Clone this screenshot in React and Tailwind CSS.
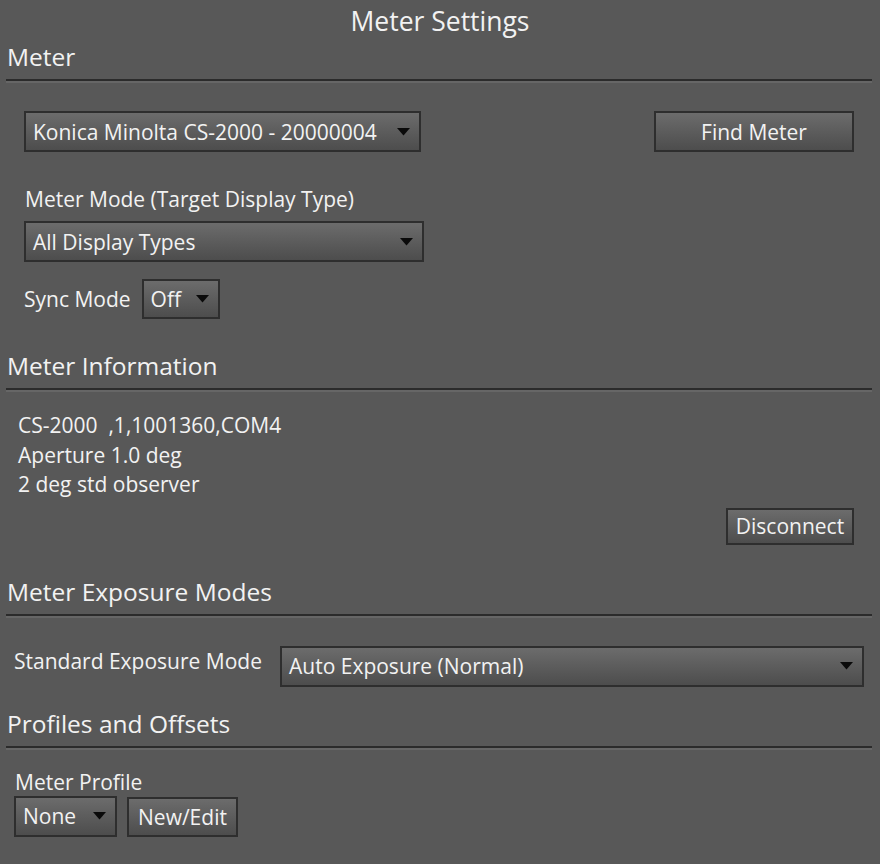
import React from "react";

function Arrow() {
  return (
    <svg width="13" height="8" viewBox="0 0 13 8" className="shrink-0">
      <path d="M0 0 L13 0 L6.5 7.5 Z" fill="#0a0a0a" />
    </svg>
  );
}

function Select({ value, className }) {
  return (
    <div
      className={
        "flex items-center justify-between border-2 border-[#2e2e2e] bg-gradient-to-b from-[#6c6c6c] to-[#4d4d4d] pl-[7px] pr-[9px] " +
        className
      }
    >
      <span className="whitespace-nowrap">{value}</span>
      <Arrow />
    </div>
  );
}

function Button({ label, className }) {
  return (
    <button
      className={
        "flex items-center justify-center border-2 border-[#2e2e2e] bg-gradient-to-b from-[#6c6c6c] to-[#4d4d4d] text-[#f2f2f2] " +
        className
      }
    >
      {label}
    </button>
  );
}

function Heading({ title }) {
  return (
    <>
      <div className="h-[34px] pl-[7px] text-[24.5px] leading-[34px]">{title}</div>
      <div className="mt-[5px] ml-[6px] w-[866px] border-t-2 border-[#2b2b2b] bg-[#666666] h-[4px]"></div>
    </>
  );
}

export default function App() {
  return (
    <div
      className="w-[880px] h-[864px] bg-[#585858] text-[#f2f2f2] text-[21px] leading-[24px] overflow-hidden"
      style={{ fontFamily: '"Open Sans", "Noto Sans", sans-serif' }}
    >
      <div className="h-[40px] flex items-center justify-center text-[26.5px] pt-[2px]">
        Meter Settings
      </div>

      <Heading title="Meter" />
      <div className="mt-[28px] pl-[24px] pr-[26px] flex justify-between">
        <Select value="Konica Minolta CS-2000 - 20000004" className="w-[397px] h-[41px]" />
        <Button label="Find Meter" className="w-[200px] h-[41px]" />
      </div>
      <div className="mt-[35px] pl-[25px] h-[24px]">Meter Mode (Target Display Type)</div>
      <div className="mt-[10px] pl-[24px]">
        <Select value="All Display Types" className="w-[400px] h-[41px]" />
      </div>
      <div className="mt-[17px] pl-[24px] flex items-center gap-[11px]">
        <span>Sync Mode</span>
        <Select value="Off" className="w-[78px] h-[40px]" />
      </div>

      <div className="mt-[30px]">
        <Heading title="Meter Information" />
      </div>
      <div className="mt-[19px] pl-[18px] leading-[29.5px]">
        <div>CS-2000&nbsp;&nbsp;,1,1001360,COM4</div>
        <div>Aperture 1.0 deg</div>
        <div>2 deg std observer</div>
      </div>
      <div className="mt-[8px] pr-[26px] flex justify-end">
        <Button label="Disconnect" className="w-[128px] h-[37px]" />
      </div>

      <div className="mt-[30px]">
        <Heading title="Meter Exposure Modes" />
      </div>
      <div className="mt-[28px] pl-[14px] flex items-start">
        <span className="mt-[3px] w-[266px]">Standard Exposure Mode</span>
        <Select value="Auto Exposure (Normal)" className="w-[584px] h-[41px]" />
      </div>

      <div className="mt-[20px]">
        <Heading title="Profiles and Offsets" />
      </div>
      <div className="mt-[20px] pl-[15px] h-[24px]">Meter Profile</div>
      <div className="mt-[2px] pl-[14px] flex items-start gap-[10px]">
        <Select value="None" className="w-[103px] h-[41px]" />
        <Button label="New/Edit" className="w-[111px] h-[40px] mt-[1px]" />
      </div>
    </div>
  );
}
